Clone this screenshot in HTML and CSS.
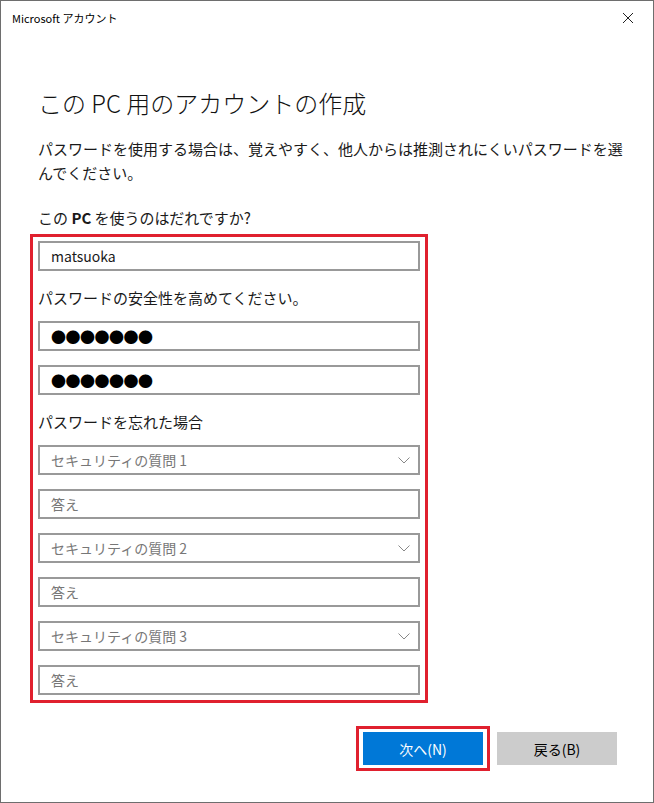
FILE: index.html
```html
<!DOCTYPE html>
<html lang="ja">
<head>
  <meta charset="UTF-8" />
  <title>Microsoft アカウント</title>
  <link rel="stylesheet" href="styles.css">
</head>
<body>
  <div class="window">
    <div class="titlebar">
      <span class="title">Microsoft アカウント</span>
      <svg class="close" width="12" height="12" viewBox="0 0 12 12">
        <path d="M1 1 L11 11 M11 1 L1 11" stroke="#222" stroke-width="1" fill="none"/>
      </svg>
    </div>

    <div class="content">
      <h1>この PC 用のアカウントの作成</h1>
      <p class="intro">パスワードを使用する場合は、覚えやすく、他人からは推測されにくいパスワードを選んでください。</p>

      <div class="label first">この <b>PC</b> を使うのはだれですか?</div>

      <div class="highlight form">
        <div class="field">matsuoka</div>

        <div class="label">パスワードの安全性を高めてください。</div>
        <div class="field dots">●●●●●●●</div>
        <div class="field dots">●●●●●●●</div>

        <div class="label">パスワードを忘れた場合</div>
        <div class="field select placeholder">
          セキュリティの質問 1
          <svg class="chev" width="12" height="7" viewBox="0 0 12 7"><path d="M0.5 0.5 L6 6 L11.5 0.5" stroke="#888" stroke-width="1" fill="none"/></svg>
        </div>
        <div class="field placeholder">答え</div>
        <div class="field select placeholder">
          セキュリティの質問 2
          <svg class="chev" width="12" height="7" viewBox="0 0 12 7"><path d="M0.5 0.5 L6 6 L11.5 0.5" stroke="#888" stroke-width="1" fill="none"/></svg>
        </div>
        <div class="field placeholder">答え</div>
        <div class="field select placeholder">
          セキュリティの質問 3
          <svg class="chev" width="12" height="7" viewBox="0 0 12 7"><path d="M0.5 0.5 L6 6 L11.5 0.5" stroke="#888" stroke-width="1" fill="none"/></svg>
        </div>
        <div class="field placeholder">答え</div>
      </div>
    </div>

    <div class="buttons">
      <div class="highlight btn-wrap">
        <button class="btn primary">次へ(N)</button>
      </div>
      <button class="btn">戻る(B)</button>
    </div>
  </div>
</body>
</html>
```

FILE: styles.css
```css
html, body {
  margin: 0;
  padding: 0;
}
body {
  font-family: "Noto Sans CJK JP", "Noto Sans", sans-serif;
  background: #fff;
  color: #1a1a1a;
}
.window {
  box-sizing: border-box;
  width: 654px;
  height: 803px;
  border: 1px solid #6e6e6e;
  display: flex;
  flex-direction: column;
}
.titlebar {
  height: 33px;
  display: flex;
  align-items: center;
  justify-content: space-between;
  padding: 0 19px 0 11px;
}
.title {
  font-size: 11px;
  color: #000;
}
.content {
  padding: 0 0 0 37px;
}
h1 {
  margin: 53px 0 0 0;
  font-size: 24px;
  font-weight: 300;
  line-height: 32px;
  color: #111;
}
.intro {
  margin: 18px 0 0 0;
  width: 590px;
  font-size: 15px;
  line-height: 24px;
}
.label {
  font-size: 15px;
  line-height: 24px;
}
.label.first {
  margin: 21px 0 4px 0;
}
.label b {
  font-weight: 700;
}
.highlight {
  border: 3px solid #e0202e;
}
.form {
  width: 382px;
  margin-left: -8px;
  padding: 4px 5px 5px 5px;
}
.field {
  box-sizing: border-box;
  height: 30px;
  border: 2px solid #999;
  padding: 0 11px;
  display: flex;
  align-items: center;
  font-size: 14px;
  margin-bottom: 14px;
}
.field:last-child {
  margin-bottom: 0;
}
.form .label {
  margin: 15px 0 11px 0;
}
.dots {
  font-size: 15px;
  letter-spacing: -0.5px;
  color: #000;
}
.placeholder {
  color: #777;
}
.select {
  justify-content: space-between;
  padding-right: 8px;
}
.buttons {
  display: flex;
  justify-content: flex-end;
  align-items: center;
  gap: 7px;
  padding: 23px 36px 0 0;
}
.btn-wrap {
  padding: 3px 4px;
  display: flex;
}
.btn {
  width: 120px;
  height: 33px;
  border: none;
  background: #cccccc;
  color: #000;
  font-family: "Noto Sans CJK JP", "Noto Sans", sans-serif;
  font-size: 14px;
  padding: 0;
}
.btn.primary {
  background: #0078d7;
  color: #fff;
}
```
